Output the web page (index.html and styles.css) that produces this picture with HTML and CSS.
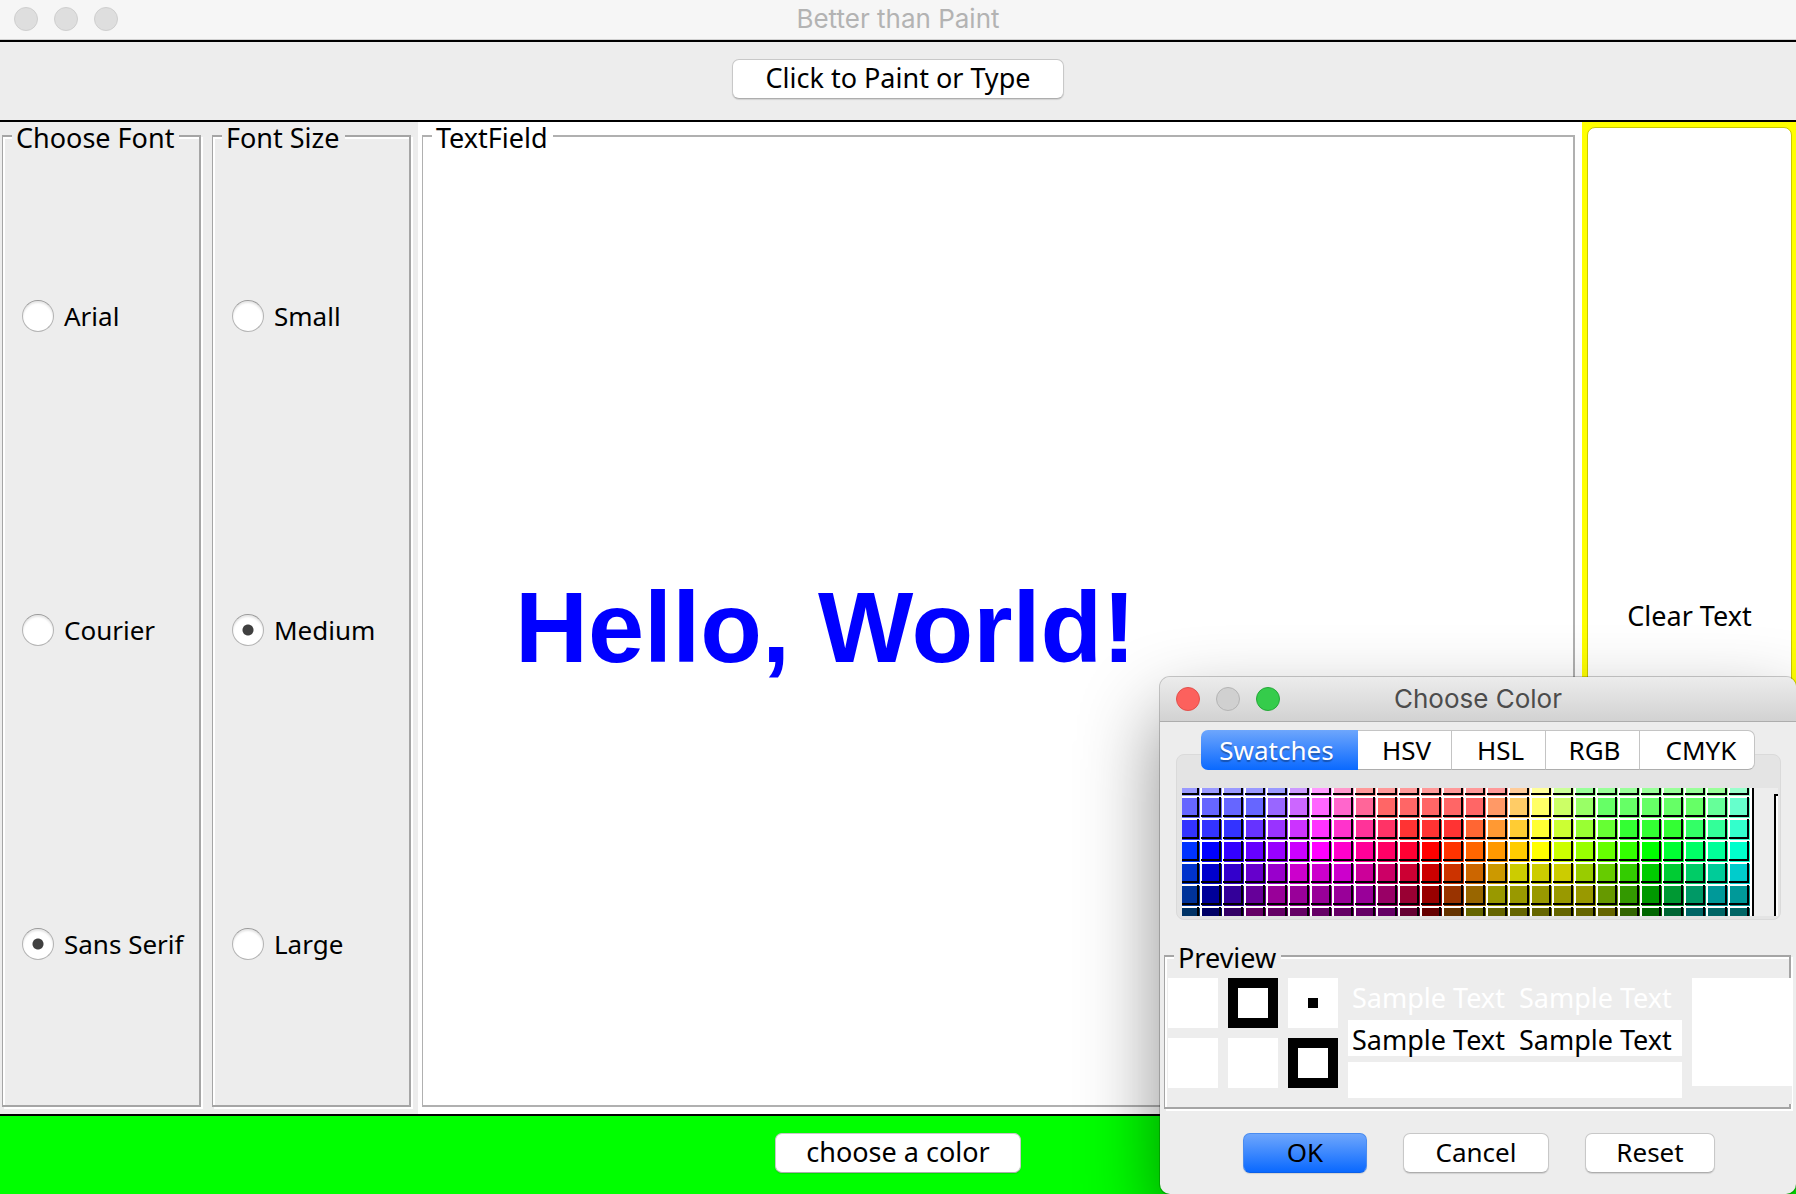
FILE: index.html
```html
<!DOCTYPE html>
<html lang="en">
<head>
<meta charset="utf-8">
<title>Better than Paint</title>
<link rel="stylesheet" href="styles.css">
</head>
<body>
<div class="app">
  <header class="titlebar">
    <div class="lights"><span class="light"></span><span class="light"></span><span class="light"></span></div>
    <h1 class="window-title">Better than Paint</h1>
  </header>
  <div class="toolbar">
    <button type="button" class="btn mode-btn">Click to Paint or Type</button>
  </div>
  <main class="main">
    <form class="options">
      <fieldset class="group">
        <legend>Choose Font</legend>
        <div class="radio-list">
          <label class="radio"><input type="radio" name="font">Arial</label>
          <label class="radio"><input type="radio" name="font">Courier</label>
          <label class="radio"><input type="radio" name="font" checked>Sans Serif</label>
        </div>
      </fieldset>
      <fieldset class="group">
        <legend>Font Size</legend>
        <div class="radio-list">
          <label class="radio"><input type="radio" name="size">Small</label>
          <label class="radio"><input type="radio" name="size" checked>Medium</label>
          <label class="radio"><input type="radio" name="size">Large</label>
        </div>
      </fieldset>
    </form>
    <section class="canvas">
      <fieldset class="group text-group">
        <legend>TextField</legend>
        <input class="text-input" type="text" value="Hello, World!" aria-label="TextField">
      </fieldset>
    </section>
    <aside class="clear">
      <button type="button" class="clear-btn">Clear Text</button>
    </aside>
  </main>
  <footer class="footer">
    <button type="button" class="btn color-btn">choose a color</button>
  </footer>

  <section class="dialog" role="dialog" aria-labelledby="dialog-title">
    <header class="dialog-bar">
      <div class="lights"><span class="light red"></span><span class="light gray"></span><span class="light green"></span></div>
      <h2 class="window-title" id="dialog-title">Choose Color</h2>
    </header>
    <div class="chooser">
      <div class="tabs" role="tablist">
        <button type="button" role="tab" class="tab selected" aria-selected="true">Swatches</button>
        <button type="button" role="tab" class="tab">HSV</button>
        <button type="button" role="tab" class="tab">HSL</button>
        <button type="button" role="tab" class="tab">RGB</button>
        <button type="button" role="tab" class="tab tab-wide">CMYK</button>
      </div>
      <div class="panel">
        <div class="swatch-view">
          <div class="swatches" id="swatches"></div>
          <div class="recent"></div>
        </div>
      </div>
    </div>
    <fieldset class="group preview">
      <legend>Preview</legend>
      <div class="preview-row">
        <div class="squares">
          <span class="square"></span><span class="square ring"></span><span class="square dot"></span>
          <span class="square"></span><span class="square"></span><span class="square ring"></span>
        </div>
        <div class="samples">
          <p class="sample plain">Sample Text&nbsp; Sample Text</p>
          <p class="sample">Sample Text&nbsp; Sample Text</p>
          <p class="sample"></p>
        </div>
        <div class="compare"><span class="compare-color"></span></div>
      </div>
    </fieldset>
    <div class="actions">
      <button type="button" class="btn primary">OK</button>
      <button type="button" class="btn cancel">Cancel</button>
      <button type="button" class="btn reset">Reset</button>
    </div>
  </section>
</div>
<script src="swatches.js"></script>
</body>
</html>
```
FILE: styles.css
```css
* { box-sizing: border-box; }

body {
  margin: 0;
  font: 26px/30px "Noto Sans", "Open Sans", sans-serif;
  color: #000;
  background: #ededed;
}

button, input { font: inherit; color: inherit; margin: 0; }

.app {
  position: relative;
  display: flex;
  flex-direction: column;
  min-height: 100vh;
  overflow: hidden;
}

/* Title bars */
.titlebar, .dialog-bar {
  display: grid;
  grid-template-columns: 1fr auto 1fr;
  align-items: center;
}
.titlebar {
  height: 40px;
  padding: 0 14px 2px;
  background: #f6f6f6;
  border-bottom: 1px solid #d0d0d0;
}
.window-title {
  margin: 0;
  font: 400 26px/30px Inter, Roboto, sans-serif;
  color: #b3b3b3;
}
.lights { display: flex; gap: 16px; }
.light {
  width: 24px;
  height: 24px;
  border: 1px solid #cfcfcf;
  border-radius: 50%;
  background: #dedede;
}
.light.red { background: #fc615d; border-color: #e2504b; }
.light.gray { background: #d0d0d0; border-color: #b4b4b4; }
.light.green { background: #35cc4b; border-color: #24a838; }

/* Buttons */
.btn {
  height: 40px;
  padding: 0 0 2px;
  border: 1px solid #c8c8c8;
  border-bottom-color: #adadad;
  border-radius: 7px;
  background: #fff;
  box-shadow: 0 1px 1px rgba(0, 0, 0, 0.12);
}
.mode-btn { width: 332px; }
.color-btn { width: 246px; }
.mode-btn, .color-btn, .clear-btn { font-size: 27px; }

.toolbar {
  display: flex;
  justify-content: center;
  padding: 17px 0 21px;
  border-top: 2px solid #000;
  border-bottom: 2px solid #000;
}

/* Main area */
.main { flex: 1; display: flex; }
.options { display: flex; gap: 11px; padding: 0 7px 7px 2px; }
.options .group { width: 199px; }

.group {
  display: flex;
  flex-direction: column;
  min-width: 0;
  margin: 0;
  padding: 0;
  border: 2px solid #a5a5a5;
  border-left-width: 1px;
  box-shadow: 2px 2px 0 #fff, inset 2px 2px 0 #fff;
}
.group legend {
  margin-left: 9px;
  padding: 4px 5px 0 4px;
  font-size: 27px;
  line-height: 24px;
  background: #ededed;
}
.radio-list {
  height: 100%;
  display: grid;
  grid-template-rows: repeat(3, 1fr);
  padding: 9px 0 4px;
}
.radio { display: flex; align-items: center; gap: 10px; padding-left: 19px; }
.radio input {
  appearance: none;
  width: 32px;
  height: 32px;
  border: 1px solid #b4b4b4;
  border-top-color: #9a9a9a;
  border-radius: 50%;
  background: #fff;
  box-shadow: inset 0 2px 2px rgba(0, 0, 0, 0.1);
}
.radio input:checked {
  background: radial-gradient(circle, #404040 5px, #fff 6px);
}

.canvas { flex: 1; display: flex; padding: 0 7px 7px 4px; background: #fff; }
.text-group { flex: 1; border-color: #b0b0b0; }
.text-group legend { background: #fff; }
.text-input {
  width: 100%;
  height: 100%;
  padding: 0 92px;
  border: 0;
  background: transparent;
  color: #00f;
  font: 700 101px/116px "Liberation Sans", Arial, sans-serif;
}

.clear { display: flex; width: 214px; padding: 5px 4px 5px 5px; background: #ff0; }
.clear-btn {
  flex: 1;
  padding: 0 0 4px;
  border: 1px solid #c9c900;
  border-radius: 8px;
  background: #fff;
}

.footer {
  display: flex;
  justify-content: center;
  padding: 17px 0 21px;
  border-top: 2px solid #000;
  background: #0f0;
}

/* Colour dialog, floating over the main window */
.dialog {
  position: absolute;
  right: 0;
  bottom: 0;
  width: 636px;
  border-radius: 10px;
  background: #ededed;
  box-shadow: 0 0 0 1px rgba(0, 0, 0, 0.2), 0 36px 80px rgba(0, 0, 0, 0.45);
}
.dialog-bar {
  height: 45px;
  padding: 0 16px;
  border-bottom: 1px solid #adadad;
  border-radius: 10px 10px 0 0;
  background: linear-gradient(#ececec, #d2d2d2);
}
.dialog-bar .window-title { color: #4c4c4c; }

.chooser { padding: 8px 15px 0 16px; }
.tabs { display: flex; padding-left: 25px; }
.tab {
  width: 94px;
  height: 40px;
  padding: 0 0 0 4px;
  border: 1px solid #c4c4c4;
  border-bottom-color: #adadad;
  border-left: 0;
  background: #fff;
  z-index: 1;
}
.tab.selected {
  width: 157px;
  padding: 0 6px 0 0;
  border: 0;
  border-radius: 7px 0 0 7px;
  color: #fff;
  text-shadow: 0 2px 1px rgba(0, 0, 0, 0.3);
}
.tab.selected, .btn.primary { background: linear-gradient(#6ea6fc, #0a69ff); }
.tab-wide { width: 115px; padding-left: 8px; border-radius: 0 7px 7px 0; }
.panel {
  margin-top: -16px;
  padding: 33px 2px 3px 5px;
  border: 1px solid #dadada;
  border-radius: 8px;
  background: #e4e4e4;
}
.swatch-view { display: flex; justify-content: space-between; height: 128px; background: #ededed; }
.swatches {
  display: grid;
  grid-template-columns: 19px repeat(25, 22px);
  grid-template-rows: 9px repeat(5, 22px) 9px;
  width: 572px;
  overflow: hidden;
  border-right: 2px solid #000;
  background: #fff;
}
.swatch {
  position: relative;
  margin: 1px;
  padding: 0;
  border: 0;
}
.swatch::before {
  content: "";
  position: absolute;
  inset: -1px 1px 1px -1px;
  border: solid #000;
  border-width: 0 2px 2px 0;
}
.swatch:nth-child(26n+1) { margin-left: 0; }
.swatch:nth-child(-n+26) { margin-top: 0; }
.swatch:nth-last-child(-n+26) { margin-bottom: 0; }
.swatch:nth-last-child(-n+26)::before { bottom: 0; border-bottom: 0; }
.recent {
  width: 4px;
  margin-top: 6px;
  border: solid #000;
  border-width: 2px 0 0 2px;
  background: #fff;
}

.preview { width: 627px; margin: 22px 0 0 4px; }
.preview-row { display: flex; gap: 10px; padding: 8px 0 3px 3px; }
.squares { display: grid; grid-template-columns: repeat(3, 50px); grid-auto-rows: 50px; gap: 10px; }
.square { background: #fff; }
.ring { border: 10px solid #000; }
.dot { border: 20px solid #fff; background: #000; }
.samples { flex: none; display: grid; grid-auto-rows: 36px; gap: 6px; width: 334px; }
.sample { margin: 0; padding-left: 4px; font-size: 27px; line-height: 40px; white-space: nowrap; background: #fff; }
.sample.plain { color: #fff; background: transparent; }
.compare { flex: none; width: 100px; height: 126px; background: #ededed; }
.compare-color { display: block; height: 108px; background: #fff; }

.actions { display: flex; justify-content: center; gap: 36px; padding: 24px 0 21px 2px; }
.primary { width: 124px; border-color: #4a8cf0; border-bottom-color: #0a5fe8; }
.cancel { width: 146px; }
.reset { width: 130px; }
```
FILE: swatches.js
```js
// Rows of the palette, each a list of [colour, repeat count].
const rows = [
  [["99f", 5], ["c9f", 1], ["f9f", 1], ["f9c", 1], ["f99", 7], ["fc9", 1], ["ff9", 1], ["cf9", 1], ["9f9", 7], ["9fc", 1]],
  [["66f", 4], ["96f", 1], ["c6f", 1], ["f6f", 1], ["f6c", 1], ["f69", 1], ["f66", 5], ["f96", 1], ["fc6", 1], ["ff6", 1], ["cf6", 1], ["9f6", 1], ["6f6", 5], ["6f9", 1], ["6fc", 1]],
  [["33f", 3], ["63f", 1], ["93f", 1], ["c3f", 1], ["f3f", 1], ["f3c", 1], ["f39", 1], ["f36", 1], ["f33", 3], ["f63", 1], ["f93", 1], ["fc3", 1], ["ff3", 1], ["cf3", 1], ["9f3", 1], ["6f3", 1], ["3f3", 3], ["3f6", 1], ["3f9", 1], ["3fc", 1]],
  [["03f", 1], ["00f", 1], ["30f", 1], ["60f", 1], ["90f", 1], ["c0f", 1], ["f0f", 1], ["f0c", 1], ["f09", 1], ["f06", 1], ["f03", 1], ["f00", 1], ["f30", 1], ["f60", 1], ["f90", 1], ["fc0", 1], ["ff0", 1], ["cf0", 1], ["9f0", 1], ["6f0", 1], ["3f0", 1], ["0f0", 1], ["0f3", 1], ["0f6", 1], ["0f9", 1], ["0fc", 1]],
  [["03c", 1], ["00c", 1], ["30c", 1], ["60c", 1], ["90c", 1], ["c0c", 3], ["c09", 1], ["c06", 1], ["c03", 1], ["c00", 1], ["c30", 1], ["c60", 1], ["c90", 1], ["cc0", 3], ["9c0", 1], ["6c0", 1], ["3c0", 1], ["0c0", 1], ["0c3", 1], ["0c6", 1], ["0c9", 1], ["0cc", 1]],
  [["039", 1], ["009", 1], ["309", 1], ["609", 1], ["909", 5], ["906", 1], ["903", 1], ["900", 1], ["930", 1], ["960", 1], ["990", 5], ["690", 1], ["390", 1], ["090", 1], ["093", 1], ["096", 1], ["099", 2]],
  [["036", 1], ["006", 1], ["306", 1], ["606", 7], ["603", 1], ["600", 1], ["630", 1], ["660", 7], ["360", 1], ["060", 1], ["063", 1], ["066", 3]]
];

const grid = document.getElementById("swatches");
for (const row of rows) {
  for (const [color, count] of row) {
    for (let i = 0; i < count; i++) {
      const swatch = document.createElement("button");
      swatch.type = "button";
      swatch.className = "swatch";
      swatch.style.backgroundColor = "#" + color;
      swatch.setAttribute("aria-label", "#" + color);
      grid.append(swatch);
    }
  }
}
```
